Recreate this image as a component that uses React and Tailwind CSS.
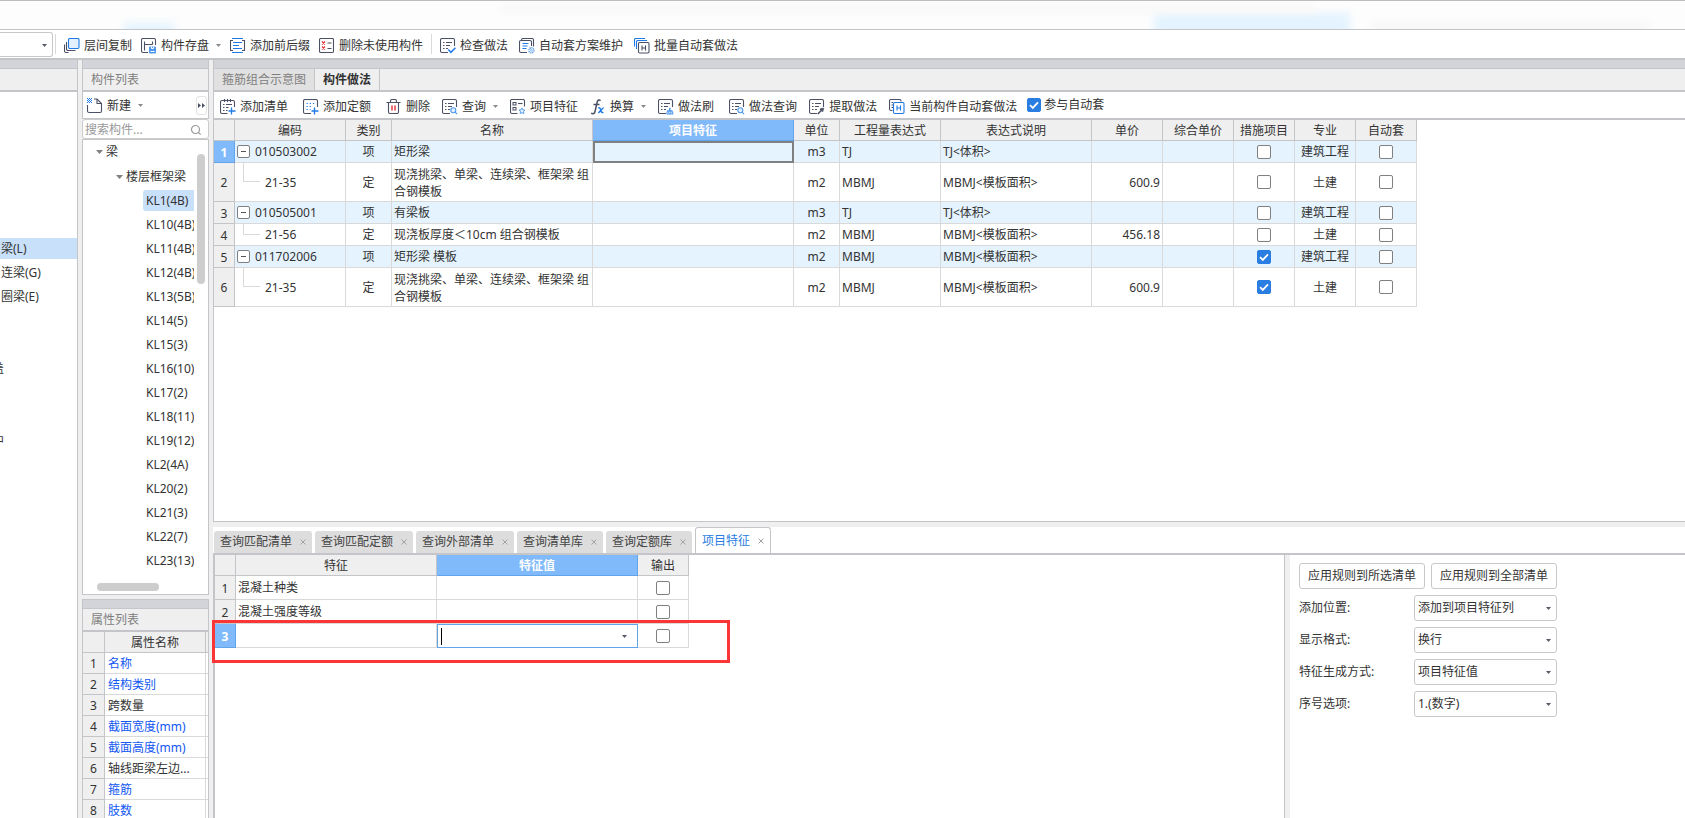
import React, { useState } from "react";

const INK = "#4b5064";
const BLUE = "#1f7ae8";

// ---------- icons ----------
const Icon = ({ children }) => (
  <svg width="16" height="16" viewBox="0 0 16 16" fill="none" stroke={INK} strokeWidth="1.1" className="shrink-0">
    {children}
  </svg>
);

// sheet with an open lower right corner
const Sheet = () => <path d="M8 14.5H2A1.5 1.5 0 0 1 .5 13V2A1.5 1.5 0 0 1 2 .5h11A1.5 1.5 0 0 1 14.500 2V8" />;
const Lines = () => <path d="M3 4.500h1.500M6 4.500h6M3 7.500h1.500M6 7.500h4M3 10.500h1.500M6 10.500h2" />;

const CopyIcon = () => (
  <Icon>
    <path d="M2.500 4v7A1.500 1.500 0 0 0 4 12.500h7.500M.5 6.500V13A1.500 1.500 0 0 0 2 14.500h2.500" />
    <rect x="4.500" y=".5" width="10.500" height="10" rx="1.200" fill="#e3f0ff" stroke={BLUE} />
  </Icon>
);
const SaveIcon = () => (
  <Icon>
    <path d="M7 14.500H2A1.500 1.500 0 0 1 .5 13V2A1.500 1.500 0 0 1 2 .5h11A1.500 1.500 0 0 1 14.500 2v5" />
    <path d="M3.500 3.500v9M3.500 6.500h8M11.500 3.500v3" />
    <rect x="8" y="8.500" width="7" height="7" rx="1" fill="#4c97ec" stroke="none" />
    <path d="M10.500 8.500v2h2v-2M9.500 13.500h4" stroke="#fff" strokeWidth="1" />
  </Icon>
);
const AffixIcon = () => (
  <Icon>
    <path d="M2 .5h11M2 14.500h11M3 4.500h9M3 7.500h6M3 10.500h9" stroke={BLUE} />
    <path d="M3 2.500H.5v10H3M12 2.500h2.500v10H12" />
  </Icon>
);
const RemoveUnusedIcon = () => (
  <Icon>
    <rect x=".5" y=".5" width="14" height="14" rx="1.200" />
    <path d="M3 3.500l3 3M6 3.500l-3 3M3 8.500l3 3M6 8.500l-3 3" stroke="#e02f35" />
    <path d="M8.500 5h4M8.500 10.500h4" />
  </Icon>
);
const CheckIcon = () => (
  <Icon>
    <Sheet />
    <Lines />
    <path d="M8.300 11.500l2.600 2.800 4.600-4.600" stroke={BLUE} strokeWidth="1.500" />
  </Icon>
);
const SchemeIcon = () => (
  <Icon>
    <path d="M2.500 2.500V2A1.500 1.500 0 0 1 4 .5h9A1.500 1.500 0 0 1 14.500 2v6.500" />
    <path d="M8 14.500H2A1.500 1.500 0 0 1 .5 13V4A1.500 1.500 0 0 1 2 2.500h9A1.500 1.500 0 0 1 12.500 4v4" />
    <path d="M3.500 5.500h6M3.500 8h5M3.500 10.500h4" stroke={BLUE} />
    <circle cx="12.400" cy="12.300" r="2.500" stroke="#6fa9ee" strokeWidth="1.600" strokeDasharray="1.300 .6" />
    <circle cx="12.400" cy="12.300" r=".9" stroke="#6fa9ee" strokeWidth=".8" />
  </Icon>
);
const BatchIcon = () => (
  <Icon>
    <path d="M.5 8.500V1.500a1 1 0 0 1 1-1H11M2.500 11V3.500a1 1 0 0 1 1-1H13" stroke={BLUE} />
    <rect x="4.500" y="4.500" width="10.500" height="10.500" rx="1.200" />
    <path d="M8 7.500v5M11.500 7.500v5M8 10h3.500" />
  </Icon>
);
const AddListIcon = () => (
  <Icon>
    <path d="M7.500 14.500H2A1.500 1.500 0 0 1 .5 13V3A1.500 1.500 0 0 1 2 1.500h11A1.500 1.500 0 0 1 14.500 3v5" />
    <path d="M4.500 0v3M7.500 0v3M10.500 0v3" />
    <path d="M3 5.500h1.500M6 5.500h6M3 8.500h1.500M6 8.500h2.500M3 11.500h1.500M6 11.500h1.500" />
    <path d="M11.500 8.500v7M8.500 12h7" stroke={BLUE} strokeWidth="1.300" />
  </Icon>
);
const AddQuotaIcon = () => (
  <Icon>
    <Sheet />
    <path d="M3.500 4.500h9M3.500 7.500h6M3.500 10.500h4" stroke={BLUE} strokeDasharray="1.300 1.900" />
    <path d="M11.500 8.500v7M8.500 12h7" stroke={BLUE} strokeWidth="1.300" />
  </Icon>
);
const TrashIcon = () => (
  <Icon>
    <path d="M.5 3.500h14M4.500 3.500V2A1.500 1.500 0 0 1 6 .5h3A1.500 1.500 0 0 1 10.500 2v1.500M2.500 3.500V13A1.500 1.500 0 0 0 4 14.500h7a1.500 1.500 0 0 0 1.500-1.500V3.500" />
    <path d="M6 6.500v5M9 6.500v5" stroke="#e02f35" strokeWidth="1.400" />
  </Icon>
);
const QueryIcon = () => (
  <Icon>
    <Sheet />
    <Lines />
    <circle cx="11.300" cy="11.300" r="2.500" fill="#e3f0ff" stroke="#4c97ec" />
    <path d="M13.100 13.100l2 2" stroke="#4c97ec" />
  </Icon>
);
const FeatureIcon = () => (
  <Icon>
    <path d="M7.500 14.500H2A1.500 1.500 0 0 1 .5 13V2A1.500 1.500 0 0 1 2 .5h11A1.500 1.500 0 0 1 14.500 2v5.500" />
    <rect x="3" y="3.500" width="3" height="2.500" strokeWidth="1" />
    <rect x="3" y="8.500" width="3" height="2.500" strokeWidth="1" />
    <path d="M8 4.500h4.500" />
    <path d="M12 8.900l.9 1.900 2.100.3-1.500 1.400.4 2.100-1.900-1-1.900 1 .4-2.100L9 11.100l2.100-.3z" fill="#e3f0ff" stroke="#4c97ec" strokeWidth=".9" />
  </Icon>
);
const FormulaIcon = () => (
  <Icon>
    <path d="M10.500 1.800C9.500.4 7.800.8 7.200 3L5 12.500C4.500 14.700 3 15.400 1.200 14.200M3.500 5.500h6" strokeWidth="1.500" />
    <path d="M8.300 9c1.600-.6 2 .3 2.500 2.200s1 2.900 2.600 2.100M13.700 8.900c-1.500-.3-4.200 4.800-5.500 4.800" stroke={BLUE} strokeWidth="1.500" />
  </Icon>
);
const BrushIcon = () => (
  <Icon>
    <Sheet />
    <Lines />
    <path d="M11.800 8.700v2.500M9 12h5.600" stroke="#4c97ec" strokeWidth="1.500" />
    <path d="M9 12.500v3M10.900 12.500v3M12.800 12.500v3M14.700 12.500v3M8.600 15h6.600" stroke="#4c97ec" />
  </Icon>
);
const ExtractIcon = () => (
  <Icon>
    <Sheet />
    <Lines />
    <path d="M8.800 15l4.200-4.200" strokeWidth="1.600" />
    <path d="M11.300 9.500l2.900 2.900M12.800 11l1.900-1.900" strokeWidth="2" />
  </Icon>
);
const CurrentIcon = () => (
  <Icon>
    <path d="M3.500 11.500H2A1.500 1.500 0 0 1 .5 10V2A1.500 1.500 0 0 1 2 .5h8.500A1.500 1.500 0 0 1 12 2v.5" />
    <path d="M2.500 3.500H4M2.500 6H4M2.500 8.500H4" />
    <rect x="4.500" y="3.500" width="10.500" height="11" rx="1.200" fill="#fff" stroke={BLUE} />
    <path d="M8 6.500v5M11.500 6.500v5M8 9h3.500" stroke={BLUE} />
  </Icon>
);
const NewIcon = () => (
  <Icon>
    <path d="M.5 7v6A1.500 1.500 0 0 0 2 14.500h11a1.500 1.500 0 0 0 1.500-1.500V5.500L10 1H7" />
    <path d="M10 1v4.500h4.500" />
    <path d="M0 .5h5M0 2.500h5M0 4.500h5" stroke={BLUE} strokeWidth="1" strokeDasharray="1 1" />
    <path d="M1 1.500h4M1 3.500h4" stroke={BLUE} strokeWidth="1" strokeDasharray="1 1" />
  </Icon>
);
const SearchIcon = () => (
  <svg width="12" height="12" viewBox="0 0 12 12" fill="none" stroke="#999" strokeWidth="1.2" className="shrink-0">
    <circle cx="5.500" cy="5.500" r="4" />
    <path d="M8.500 8.500l2.200 2.200" />
  </svg>
);
const Caret = ({ color = "#8a8a8a" }) => (
  <svg width="5" height="3" viewBox="0 0 5 3" fill={color} className="shrink-0">
    <path d="M0 0h5L2.500 3z" />
  </svg>
);
const Triangle = () => (
  <svg width="7" height="4" viewBox="0 0 7 4" fill="#808080" className="shrink-0">
    <path d="M0 0h7L3.500 4z" />
  </svg>
);
const CloseIcon = () => (
  <svg width="6" height="6" viewBox="0 0 6 6" fill="none" stroke="#a3a3a3" className="shrink-0">
    <path d="M.5.5l5 5M5.500.5l-5 5" />
  </svg>
);

// ---------- data ----------
const topTools = [
  { name: "层间复制", icon: <CopyIcon /> },
  { name: "构件存盘", icon: <SaveIcon />, menu: true },
  { name: "添加前后缀", icon: <AffixIcon /> },
  { name: "删除未使用构件", icon: <RemoveUnusedIcon /> },
];
const topTools2 = [
  { name: "检查做法", icon: <CheckIcon /> },
  { name: "自动套方案维护", icon: <SchemeIcon /> },
  { name: "批量自动套做法", icon: <BatchIcon /> },
];
const methodTools = [
  { name: "添加清单", icon: <AddListIcon />, wide: true },
  { name: "添加定额", icon: <AddQuotaIcon />, wide: true },
  { name: "删除", icon: <TrashIcon /> },
  { name: "查询", icon: <QueryIcon />, menu: true },
  { name: "项目特征", icon: <FeatureIcon /> },
  { name: "换算", icon: <FormulaIcon />, menu: true },
  { name: "做法刷", icon: <BrushIcon />, wide: true },
  { name: "做法查询", icon: <QueryIcon /> },
  { name: "提取做法", icon: <ExtractIcon /> },
  { name: "当前构件自动套做法", icon: <CurrentIcon /> },
];

const members = [
  "KL1(4B)", "KL10(4B)", "KL11(4B)", "KL12(4B)", "KL13(5B)", "KL14(5)", "KL15(3)", "KL16(10)",
  "KL17(2)", "KL18(11)", "KL19(12)", "KL2(4A)", "KL20(2)", "KL21(3)", "KL22(7)", "KL23(13)",
];

const attributes = [
  { name: "名称", link: true },
  { name: "结构类别", link: true },
  { name: "跨数量" },
  { name: "截面宽度(mm)", link: true },
  { name: "截面高度(mm)", link: true },
  { name: "轴线距梁左边..." },
  { name: "箍筋", link: true },
  { name: "肢数", link: true },
];

const columns = ["编码", "类别", "名称", "项目特征", "单位", "工程量表达式", "表达式说明", "单价", "综合单价", "措施项目", "专业", "自动套"];

const rows = [
  { code: "010503002", name: "矩形梁", unit: "m3", expr: "TJ", desc: "TJ<体积>", parent: true },
  { code: "21-35", name: "现浇挑梁、单梁、连续梁、框架梁 组合钢模板", unit: "m2", expr: "MBMJ", desc: "MBMJ<模板面积>", price: "600.9", tall: true },
  { code: "010505001", name: "有梁板", unit: "m3", expr: "TJ", desc: "TJ<体积>", parent: true },
  { code: "21-56", name: "现浇板厚度＜10cm 组合钢模板", unit: "m2", expr: "MBMJ", desc: "MBMJ<模板面积>", price: "456.18" },
  { code: "011702006", name: "矩形梁 模板", unit: "m2", expr: "MBMJ", desc: "MBMJ<模板面积>", parent: true, measure: true },
  { code: "21-35", name: "现浇挑梁、单梁、连续梁、框架梁 组合钢模板", unit: "m2", expr: "MBMJ", desc: "MBMJ<模板面积>", price: "600.9", tall: true, measure: true },
];

const tabs = ["查询匹配清单", "查询匹配定额", "查询外部清单", "查询清单库", "查询定额库", "项目特征"];

const options = [
  { id: "position", label: "添加位置:", value: "添加到项目特征列" },
  { id: "format", label: "显示格式:", value: "换行" },
  { id: "mode", label: "特征生成方式:", value: "项目特征值" },
  { id: "order", label: "序号选项:", value: "1.(数字)" },
];

// ---------- shared parts ----------
const Tool = ({ item }) => (
  <button type="button" className={`flex items-center whitespace-nowrap ${item.wide ? "mr-[3px]" : ""}`}>
    {item.icon}
    <span className="ml-1">{item.name}</span>
    {item.menu && <span className="ml-[7px]"><Caret /></span>}
  </button>
);

const CheckBox = ({ id, label, defaultChecked = false }) => {
  const [checked, setChecked] = useState(defaultChecked);
  return (
    <span className="relative block h-[14px] w-[14px] shrink-0">
      <input
        id={id}
        type="checkbox"
        aria-label={label}
        checked={checked}
        onChange={() => setChecked(!checked)}
        className="block h-[14px] w-[14px] appearance-none rounded-[2px] border border-[#808080] bg-white checked:border-[#2a7de1] checked:bg-[#2a7de1]"
      />
      {checked && (
        <svg viewBox="0 0 14 14" fill="none" stroke="#fff" strokeWidth="1.8" className="pointer-events-none absolute inset-0">
          <path d="M3 7.200l2.800 2.700L11 4.300" />
        </svg>
      )}
    </span>
  );
};

const Strip = () => <div className="h-[9px] shrink-0 border-b border-[#c4c6cc] bg-[#d3d4da]" />;

const cell = "border-r border-b border-[#d9d9d9] p-0 px-[2px]";
const head = "border-r border-b border-[#c3c5c9] bg-[#efefef] p-0 pt-[2px] font-normal";
const headActive = "border-r border-b border-[#62a4ea] bg-[#81bafa] p-0 pt-[2px] font-bold text-white";

// ---------- panels ----------
const TypePanel = () => (
  <aside className="flex w-[78px] shrink-0 flex-col overflow-hidden border-r border-[#c3c5c9] bg-white">
    <Strip />
    <div className="h-[23px] shrink-0 border-b-2 border-[#c3c5c9] bg-[#efefef]" />
    <ul className="mt-[146px] leading-[22px]">
      <li className="h-6"><span className="block h-[21px] bg-[#c9e0fa] pl-px leading-[21px]">梁(L)</span></li>
      <li className="h-6 pl-px">连梁(G)</li>
      <li className="h-6 pl-px">圈梁(E)</li>
      <li className="mt-12 flex h-6 w-[4px] justify-end overflow-hidden">盖</li>
      <li className="mt-12 flex h-6 w-[4px] justify-end overflow-hidden">中</li>
    </ul>
  </aside>
);

const MemberPanel = () => (
  <section className="flex min-h-0 flex-1 flex-col">
    <div className="border-x border-[#c3c5c9]">
      <Strip />
      <h2 className="h-[23px] border-b-2 border-[#c3c5c9] bg-[#efefef] pl-2 leading-[22px] text-[#808080]">构件列表</h2>
    </div>
    <div className="flex h-[27px] shrink-0 items-center justify-between border-x border-b border-[#c3c5c9] bg-white pt-px pl-1">
      <button type="button" className="flex items-center">
        <NewIcon />
        <span className="ml-1">新建</span>
        <span className="ml-[7px]"><Caret /></span>
      </button>
      <button type="button" aria-label="更多" className="mr-px flex h-[19px] w-[11px] items-center justify-center rounded-[3px] border border-[#e3e3e3]">
        <svg width="7" height="5" viewBox="0 0 7 5" fill={INK} className="shrink-0"><path d="M0 0l3 2.500L0 5zM4 0l3 2.500L4 5z" /></svg>
      </button>
    </div>
    <div className="flex h-[20px] shrink-0 items-center rounded-[3px] border border-[#cccccc] bg-white pt-px pr-[6px] pl-[2px]">
      <input type="text" aria-label="搜索构件" placeholder="搜索构件..." className="w-full min-w-0 flex-1 bg-transparent outline-none placeholder:text-[#999]" />
      <SearchIcon />
    </div>
    <div className="flex min-h-0 flex-1 flex-col border border-[#c3c5c9] bg-white">
      <div className="flex min-h-0 flex-1">
        <ul className="w-[111px] overflow-hidden whitespace-nowrap">
          <li className="flex h-6 items-center pl-[13px]"><Triangle /><span className="ml-[3px]">梁</span></li>
          <li className="flex h-6 items-center pt-px pl-[33px]"><Triangle /><span className="ml-[3px]">楼层框架梁</span></li>
          {members.map((m, i) => (
            <li key={m} className="flex h-6 items-center pl-[60px]">
              <span className={`h-[21px] w-full rounded-l-[3px] pl-[3px] leading-[21px] ${i === 0 ? "bg-[#c9e0fa]" : ""}`}>{m}</span>
            </li>
          ))}
        </ul>
        <div className="mt-[14px] ml-[3px] h-[130px] w-2 rounded-full bg-[#cdcdcd]" />
      </div>
      <div className="mb-[3px] ml-[14px] h-2 w-[62px] rounded-full bg-[#cdcdcd]" />
    </div>
  </section>
);

const AttributePanel = () => (
  <section className="h-[219px] shrink-0 overflow-hidden border-x border-t border-[#c3c5c9] bg-white">
    <Strip />
    <h2 className="h-[23px] border-b-2 border-[#c3c5c9] bg-[#efefef] pl-2 leading-[22px] text-[#808080]">属性列表</h2>
    <table className="w-full table-fixed border-separate border-spacing-0">
      <colgroup><col className="w-[22px]" /><col className="w-[101px]" /><col /></colgroup>
      <thead>
        <tr className="h-[21px]">
          <th className={head} />
          <th className={head}>属性名称</th>
          <th className="border-b border-[#c3c5c9] bg-[#efefef] p-0" />
        </tr>
      </thead>
      <tbody>
        {attributes.map((a, i) => (
          <tr key={a.name} className="h-[21px]">
            <th className={head}>{i + 1}</th>
            <td className={`${cell} pt-[2px] pl-[3px] whitespace-nowrap ${a.link ? "text-[#1257f2]" : ""}`}>{a.name}</td>
            <td className="border-b border-[#d9d9d9] p-0" />
          </tr>
        ))}
      </tbody>
    </table>
  </section>
);

const CodeCell = ({ row }) =>
  row.parent ? (
    <div className="flex items-center">
      <button type="button" aria-label="折叠" className="flex h-[13px] w-[13px] items-center justify-center rounded-[2px] border border-[#808080] bg-white">
        <span className="h-px w-[5px] bg-[#555]" />
      </button>
      <span className="ml-[5px]">{row.code}</span>
    </div>
  ) : (
    <div className={`flex items-center ${row.tall ? "h-[38px]" : "h-[21px]"}`}>
      <span className={`ml-[6px] w-[17px] self-start border-b border-l border-[#d9d9d9] ${row.tall ? "h-[19px]" : "h-[11px]"}`} />
      <span className={`ml-[5px] ${row.tall ? "pt-[2px]" : ""}`}>{row.code}</span>
    </div>
  );

const MethodTable = () => (
  <table className="w-[1203px] table-fixed border-separate border-spacing-0">
    <colgroup>
      <col className="w-[21px]" /><col className="w-[111px]" /><col className="w-[46px]" /><col className="w-[201px]" />
      <col className="w-[201px]" /><col className="w-[46px]" /><col className="w-[101px]" /><col className="w-[151px]" />
      <col className="w-[71px]" /><col className="w-[71px]" /><col className="w-[61px]" /><col className="w-[61px]" /><col className="w-[61px]" />
    </colgroup>
    <thead>
      <tr className="h-[21px]">
        <th className={head} />
        {columns.map((c) => <th key={c} className={c === "项目特征" ? headActive : head}>{c}</th>)}
      </tr>
    </thead>
    <tbody>
      {rows.map((r, i) => {
        const text = `${cell} ${r.tall ? "pt-[2px]" : ""}`;
        return (
          <tr key={i} className={`${r.tall ? "h-[39px]" : "h-[22px]"} ${r.parent ? "bg-[#e5f3ff]" : ""}`}>
            <th className={i === 0 ? headActive : head}>{i + 1}</th>
            <td className={cell}><CodeCell row={r} /></td>
            <td className={`${text} text-center`}>{r.parent ? "项" : "定"}</td>
            <td className={`${text} leading-[17px]`}>{r.name}</td>
            <td className={i === 0 ? "border-2 border-[#808080] p-0" : cell} />
            <td className={`${text} text-center`}>{r.unit}</td>
            <td className={text}>{r.expr}</td>
            <td className={text}>{r.desc}</td>
            <td className={`${text} text-right`}>{r.price}</td>
            <td className={cell} />
            <td className={cell}><div className="flex justify-center"><CheckBox label="措施项目" defaultChecked={r.measure} /></div></td>
            <td className={`${text} text-center`}>{r.parent ? "建筑工程" : "土建"}</td>
            <td className={cell}><div className="flex justify-center"><CheckBox label="自动套" /></div></td>
          </tr>
        );
      })}
    </tbody>
  </table>
);

const FeatureTable = () => (
  <table className="w-[474px] table-fixed border-separate border-spacing-0">
    <colgroup><col className="w-[21px]" /><col className="w-[201px]" /><col className="w-[201px]" /><col className="w-[51px]" /></colgroup>
    <thead>
      <tr className="h-[21px]">
        <th className={head} />
        <th className={head}>特征</th>
        <th className={headActive}>特征值</th>
        <th className={head}>输出</th>
      </tr>
    </thead>
    <tbody>
      {["混凝土种类", "混凝土强度等级", ""].map((name, i) => (
        <tr key={i} className="h-6">
          <th className={i === 2 ? headActive : head}>{i + 1}</th>
          <td className={cell}>{name}</td>
          {i === 2 ? (
            <td className="border border-[#62a4ea] p-0">
              <div className="flex h-[22px] items-center pr-[10px] pl-[3px]">
                <span className="h-[17px] w-px bg-black" />
                <input type="text" aria-label="特征值" className="min-w-0 flex-1 outline-none" />
                <Caret color="#555a66" />
              </div>
            </td>
          ) : (
            <td className={cell} />
          )}
          <td className={cell}><div className="flex justify-center"><CheckBox label="输出" /></div></td>
        </tr>
      ))}
    </tbody>
  </table>
);

const OptionPanel = () => (
  <form className="w-[395px] shrink-0 bg-white pt-2 pl-[9px]">
    <div className="flex w-[258px] justify-between">
      <button type="button" className="h-[26px] w-[126px] rounded-[3px] border border-[#c8c8c8]">应用规则到所选清单</button>
      <button type="button" className="h-[26px] w-[126px] rounded-[3px] border border-[#c8c8c8]">应用规则到全部清单</button>
    </div>
    {options.map((o) => (
      <div key={o.id} className="mt-[6px] flex w-[258px] items-center justify-between">
        <label htmlFor={o.id}>{o.label}</label>
        <div className="relative">
          <select id={o.id} className="block h-[26px] w-[143px] appearance-none rounded-[3px] border border-[#c8c8c8] bg-white pl-[3px]">
            <option>{o.value}</option>
          </select>
          <span className="pointer-events-none absolute top-3 right-[6px] flex"><Caret color="#555a66" /></span>
        </div>
      </div>
    ))}
  </form>
);

const App = () => {
  const [activeTab, setActiveTab] = useState("项目特征");

  return (
    <div className="flex h-screen flex-col overflow-hidden bg-[#efefef] font-['Noto_Sans','Noto_Sans_CJK_SC',sans-serif] text-[12px] leading-4 text-[#333]">
      {/* frosted title strip */}
      <div className="relative h-[30px] shrink-0 overflow-hidden border-t border-b border-t-[#bdbdbd] border-b-[#c3c5c9] bg-[#fdfdfd]">
        <div className="absolute top-3 left-[1154px] h-6 w-[196px] bg-[#e4f3fe] blur-[4px]" />
        <div className="absolute top-[22px] left-[124px] h-4 w-[50px] bg-[#e4f3fe] blur-[4px]" />
        <div className="absolute top-1 left-[500px] h-2 w-[815px] bg-[#f8f8f8] blur-[3px]" />
        <div className="absolute top-[22px] left-[1370px] h-2 w-[280px] bg-[#f6f6f6] blur-[4px]" />
      </div>

      {/* main toolbar */}
      <header className="flex h-[30px] shrink-0 items-center border-b-2 border-[#c3c5c9] bg-white">
        <div className="relative">
          <select aria-label="楼层" className="block h-[25px] w-[53px] appearance-none rounded-r-[3px] border border-l-0 border-[#c8c8c8] bg-white">
            <option></option>
          </select>
          <span className="pointer-events-none absolute top-3 right-[6px] flex"><Caret color="#555a66" /></span>
        </div>
        <span className="mr-2 ml-[2px] h-5 w-px bg-[#d9d9d9]" />
        <div className="flex gap-[9px] pt-[3px]">
          {topTools.map((t) => <Tool key={t.name} item={t} />)}
        </div>
        <span className="mx-2 h-5 w-px bg-[#d9d9d9]" />
        <div className="flex gap-[11px] pt-[3px]">
          {topTools2.map((t) => <Tool key={t.name} item={t} />)}
        </div>
      </header>

      <div className="flex min-h-0 flex-1 gap-1">
        <TypePanel />

        <div className="flex w-[127px] shrink-0 flex-col gap-1">
          <MemberPanel />
          <AttributePanel />
        </div>

        <main className="flex min-w-0 flex-1 flex-col">
          <section className="flex min-h-0 flex-1 flex-col border-b border-l border-[#c3c5c9] bg-white">
            <Strip />
            <div className="flex h-[23px] shrink-0 border-b-2 border-[#c3c5c9] bg-[#efefef]">
              <button type="button" className="w-[101px] border-r border-[#c3c5c9] bg-[#e1e1e1] text-[#808080]">箍筋组合示意图</button>
              <button type="button" className="w-[65px] border-r border-[#c3c5c9] font-bold">构件做法</button>
            </div>
            <div className="flex h-7 shrink-0 items-center gap-[10px] border-b-2 border-[#c3c5c9] pl-[6px]">
              <div className="flex gap-3 pt-[3px]">
                {methodTools.map((t) => <Tool key={t.name} item={t} />)}
              </div>
              <div className="flex items-center">
                <CheckBox id="auto" defaultChecked />
                <label htmlFor="auto" className="ml-[3px]">参与自动套</label>
              </div>
            </div>
            <MethodTable />
          </section>

          <section className="relative mt-[5px] flex h-[291px] shrink-0 flex-col bg-white">
            <div className="flex h-7 items-end gap-[3px] border-b-2 border-[#c3c5c9] pl-px">
              {tabs.map((t) => (
                <button
                  key={t}
                  type="button"
                  onClick={() => setActiveTab(t)}
                  className={`flex items-center gap-2 rounded-t-[3px] px-[6px] ${
                    activeTab === t
                      ? "h-[26px] border border-b-0 border-[#c3c5c9] bg-white text-[#2a7de1]"
                      : "h-[22px] bg-[#dddddd] text-[#444]"
                  }`}
                >
                  {t}
                  <CloseIcon />
                </button>
              ))}
            </div>
            <div className="flex min-h-0 flex-1">
              <div className="min-w-0 flex-1 border-r border-l-2 border-[#c3c5c9]">
                <FeatureTable />
              </div>
              <div className="w-[5px] bg-[#efefef]" />
              <OptionPanel />
            </div>
            {/* highlighted new row */}
            <div className="pointer-events-none absolute top-[93px] -left-px h-[43px] w-[518px] border-[3px] border-[#fc3636]" />
          </section>
        </main>
      </div>
    </div>
  );
};

export default App;
